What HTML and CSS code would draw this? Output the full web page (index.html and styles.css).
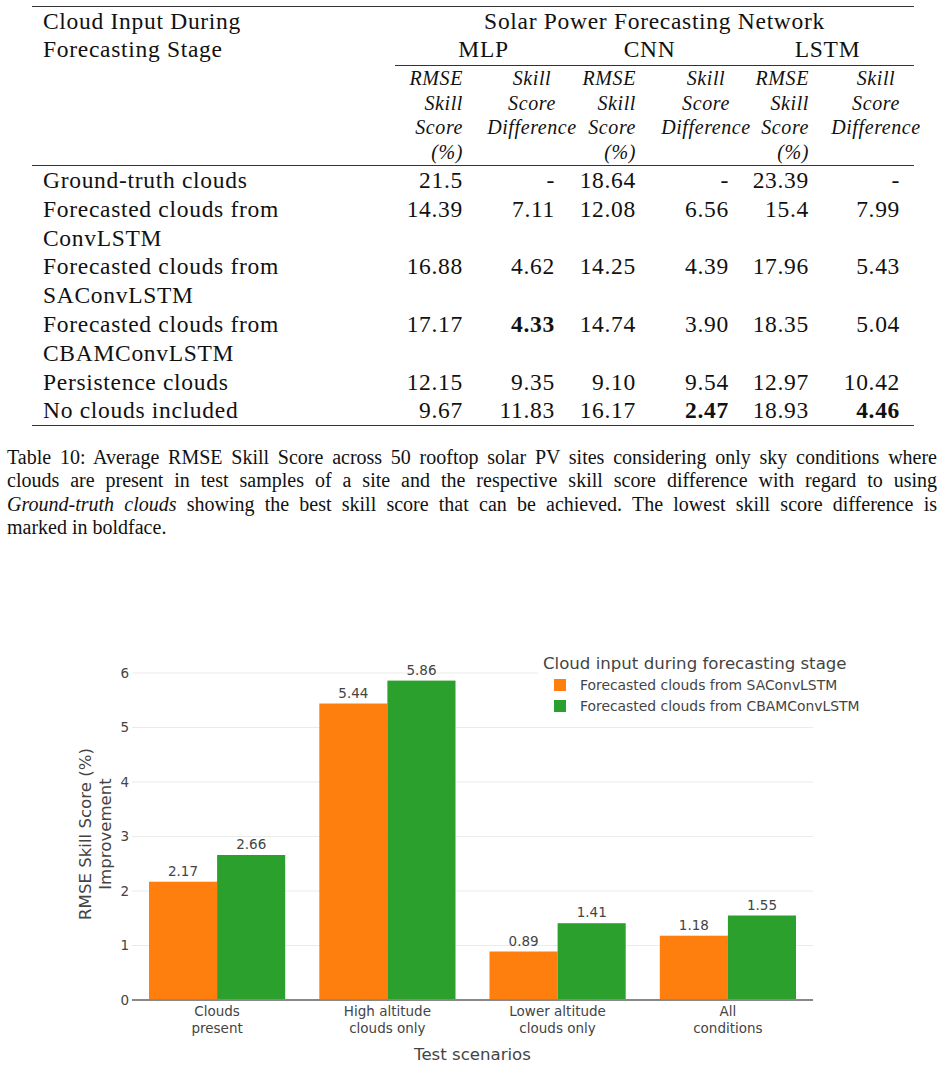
FILE: index.html
```html
<!DOCTYPE html>
<html lang="en">
<head>
    <meta charset="UTF-8">
    <title>Table 10 and cloud input chart</title>
    <link rel="stylesheet" href="styles.css">
</head>
<body>
    <div class="tablewrap">
        <table class="results">
            <colgroup>
                <col class="c-label">
                <col class="c-rmse1">
                <col class="c-diff1">
                <col class="c-rmse2">
                <col class="c-diff2">
                <col class="c-rmse3">
                <col class="c-diff3">
            </colgroup>
            <tr class="toprow">
                <td class="label">Cloud Input During</td>
                <td colspan="6" class="center">Solar Power Forecasting Network</td>
            </tr>
            <tr class="netrow">
                <td class="label">Forecasting Stage</td>
                <td colspan="2" class="center rule n1">MLP</td>
                <td colspan="2" class="center rule n2">CNN</td>
                <td colspan="2" class="center rule n3">LSTM</td>
            </tr>
            <tr class="subhead">
                <td></td>
                <td class="num p7">RMSE<br>Skill<br>Score<br>(%)</td>
                <td><div class="diff d1">Skill<br>Score<br>Difference</div></td>
                <td class="num p6">RMSE<br>Skill<br>Score<br>(%)</td>
                <td><div class="diff d2">Skill<br>Score<br>Difference</div></td>
                <td class="num p6">RMSE<br>Skill<br>Score<br>(%)</td>
                <td><div class="diff d3">Skill<br>Score<br>Difference</div></td>
            </tr>
            <tr class="first">
                <td class="label">Ground-truth clouds</td>
                <td class="num p7">21.5</td><td class="num p5">-</td>
                <td class="num p6">18.64</td><td class="num p6">-</td>
                <td class="num p6">23.39</td><td class="num p14">-</td>
            </tr>
            <tr>
                <td class="label">Forecasted clouds from<br>ConvLSTM</td>
                <td class="num p7">14.39</td><td class="num p5">7.11</td>
                <td class="num p6">12.08</td><td class="num p6">6.56</td>
                <td class="num p6">15.4</td><td class="num p14">7.99</td>
            </tr>
            <tr>
                <td class="label">Forecasted clouds from<br>SAConvLSTM</td>
                <td class="num p7">16.88</td><td class="num p5">4.62</td>
                <td class="num p6">14.25</td><td class="num p6">4.39</td>
                <td class="num p6">17.96</td><td class="num p14">5.43</td>
            </tr>
            <tr>
                <td class="label">Forecasted clouds from<br>CBAMConvLSTM</td>
                <td class="num p7">17.17</td><td class="num p5"><b>4.33</b></td>
                <td class="num p6">14.74</td><td class="num p6">3.90</td>
                <td class="num p6">18.35</td><td class="num p14">5.04</td>
            </tr>
            <tr>
                <td class="label">Persistence clouds</td>
                <td class="num p7">12.15</td><td class="num p5">9.35</td>
                <td class="num p6">9.10</td><td class="num p6">9.54</td>
                <td class="num p6">12.97</td><td class="num p14">10.42</td>
            </tr>
            <tr class="lastrow">
                <td class="label">No clouds included</td>
                <td class="num p7">9.67</td><td class="num p5">11.83</td>
                <td class="num p6">16.17</td><td class="num p6"><b>2.47</b></td>
                <td class="num p6">18.93</td><td class="num p14"><b>4.46</b></td>
            </tr>
        </table>
    </div>

    <div class="caption">
        <span class="line">Table 10: Average RMSE Skill Score across 50 rooftop solar PV sites considering only sky conditions where</span>
        <span class="line">clouds are present in test samples of a site and the respective skill score difference with regard to using</span>
        <span class="line"><i>Ground-truth clouds</i> showing the best skill score that can be achieved. The lowest skill score difference is</span>
        <span class="line end">marked in boldface.</span>
    </div>

    <svg class="chart" width="944" height="468" viewBox="0 0 944 468">
        <!-- grid -->
        <g class="grid">
            <line x1="132" y1="346.5" x2="813" y2="346.5"/>
            <line x1="132" y1="292" x2="813" y2="292"/>
            <line x1="132" y1="237.5" x2="813" y2="237.5"/>
            <line x1="132" y1="183" x2="813" y2="183"/>
            <line x1="132" y1="128.5" x2="813" y2="128.5"/>
            <line x1="132" y1="74" x2="813" y2="74"/>
        </g>

        <!-- bars -->
        <g fill="#ff7f0e">
            <rect x="149" y="282.7" width="68.1" height="118.3"/>
            <rect x="319.3" y="104.5" width="68.1" height="296.5"/>
            <rect x="489.5" y="352.5" width="68.1" height="48.5"/>
            <rect x="659.8" y="336.7" width="68.1" height="64.3"/>
        </g>
        <g fill="#2ca02c">
            <rect x="217.1" y="256" width="68.1" height="145"/>
            <rect x="387.4" y="81.6" width="68.1" height="319.4"/>
            <rect x="557.6" y="324.2" width="68.1" height="76.8"/>
            <rect x="727.9" y="316.5" width="68.1" height="84.5"/>
        </g>
        <line class="zero" x1="132" y1="401" x2="813" y2="401"/>

        <!-- bar values -->
        <g class="tick" text-anchor="middle">
            <text x="183" y="276.7">2.17</text>
            <text x="251.2" y="250">2.66</text>
            <text x="353.4" y="98.5">5.44</text>
            <text x="421.5" y="75.6">5.86</text>
            <text x="523.6" y="346.5">0.89</text>
            <text x="591.7" y="318.2">1.41</text>
            <text x="693.9" y="330.7">1.18</text>
            <text x="762" y="310.5">1.55</text>
        </g>

        <!-- y ticks -->
        <g class="tick" text-anchor="end">
            <text x="129" y="405.9">0</text>
            <text x="129" y="351.4">1</text>
            <text x="129" y="296.9">2</text>
            <text x="129" y="242.4">3</text>
            <text x="129" y="187.9">4</text>
            <text x="129" y="133.4">5</text>
            <text x="129" y="78.9">6</text>
        </g>

        <!-- x ticks -->
        <g class="tick" text-anchor="middle">
            <text x="217.1" y="417">Clouds</text>
            <text x="217.1" y="434">present</text>
            <text x="387.4" y="417">High altitude</text>
            <text x="387.4" y="434">clouds only</text>
            <text x="557.6" y="417">Lower altitude</text>
            <text x="557.6" y="434">clouds only</text>
            <text x="727.9" y="417">All</text>
            <text x="727.9" y="434">conditions</text>
        </g>

        <!-- axis titles -->
        <text class="title" x="472.5" y="461" text-anchor="middle">Test scenarios</text>
        <g transform="translate(85 235) rotate(-90)">
            <text class="title" x="0" y="5.5" text-anchor="middle">RMSE Skill Score (%)</text>
        </g>
        <g transform="translate(105 235) rotate(-90)">
            <text class="title" x="0" y="5.5" text-anchor="middle">Improvement</text>
        </g>

        <!-- legend -->
        <rect x="538" y="48" width="330" height="70" fill="#fff"/>
        <text class="title" x="543" y="69.5">Cloud input during forecasting stage</text>
        <rect x="554" y="80" width="12" height="12" fill="#ff7f0e"/>
        <text class="item" x="580" y="90.5">Forecasted clouds from SAConvLSTM</text>
        <rect x="554" y="101" width="12" height="12" fill="#2ca02c"/>
        <text class="item" x="580" y="111.5">Forecasted clouds from CBAMConvLSTM</text>
    </svg>
</body>
</html>
```

FILE: styles.css
```css
body {
    margin: 0;
    background-color: white;
    color: #111;
    font-family: "Liberation Serif", "Times New Roman", serif;
    overflow: hidden;
}
.tablewrap {
    margin-left: 32px;
    padding-top: 6px;
    width: 882px;
}
.results {
    width: 882px;
    table-layout: fixed;
    border-collapse: separate;
    border-spacing: 0;
    font-family: "Liberation Serif", "Times New Roman", serif;
    font-size: 23.5px;
    letter-spacing: 0.7px;
}
.c-label { width: 363px; }
.c-rmse1 { width: 75px; }
.c-diff1 { width: 90px; }
.c-rmse2 { width: 82px; }
.c-diff2 { width: 93px; }
.c-rmse3 { width: 80px; }
.c-diff3 { width: 99px; }
.results td {
    padding: 0;
    vertical-align: top;
    white-space: nowrap;
}
.toprow td {
    border-top: 1px solid #333;
    line-height: 28px;
}
.netrow td {
    line-height: 28px;
}
.netrow td.rule {
    border-bottom: 1px solid #333;
    padding-bottom: 2px;
}
.netrow .n1 { padding-left: 12px; }
.netrow .n2 { padding-left: 4px; }
.netrow .n3 { padding-left: 6px; }
.label {
    padding-left: 11px !important;
}
.center {
    text-align: center;
}
.subhead td {
    font-style: italic;
    font-size: 20px;
    letter-spacing: 0.6px;
    line-height: 24.5px;
    border-bottom: 1px solid #333;
    padding-bottom: 1px !important;
}
.diff {
    width: 92px;
    text-align: center;
}
.d1 { margin-left: 16px; }
.d2 { margin-left: 18px; }
.d3 { margin-left: 15px; }
.results tr:not(.toprow):not(.netrow):not(.subhead) td {
    line-height: 28.8px;
}
.lastrow td {
    border-bottom: 1px solid #333;
}
.num {
    text-align: right;
}
.p5 { padding-right: 5px !important; }
.p6 { padding-right: 6px !important; }
.p7 { padding-right: 7px !important; }
.p14 { padding-right: 14px !important; }

.caption {
    margin: 20px 7px 0 7px;
    font-size: 20px;
    line-height: 23.3px;
    color: #111;
}
.caption .line {
    display: block;
    white-space: nowrap;
    text-align: justify;
    text-align-last: justify;
}
.caption .line.end {
    text-align-last: left;
}

.chart {
    display: block;
    margin-top: 60px;
    font-family: "DejaVu Sans", Verdana, sans-serif;
}
.grid line {
    stroke: #ebebeb;
    stroke-width: 1;
}
.zero {
    stroke: #888;
    stroke-width: 2;
}
.tick {
    font-size: 13.5px;
    fill: #444;
}
.item {
    font-size: 13.9px;
    fill: #444;
}
.title {
    font-size: 16.6px;
    fill: #444;
}
```
